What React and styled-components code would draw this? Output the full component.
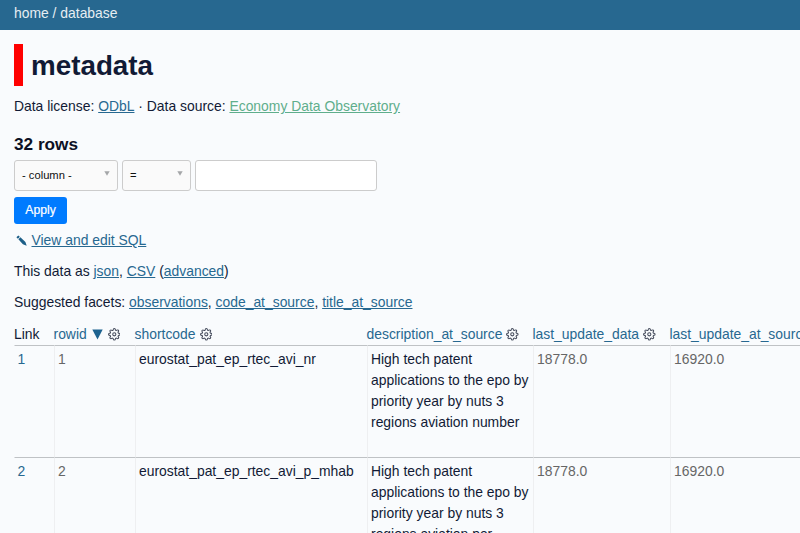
import React from "react";
import styled, { createGlobalStyle } from "styled-components";

const GlobalStyle = createGlobalStyle`
  *, *::before, *::after { box-sizing: border-box; }
  html, body { margin: 0; height: 100%; overflow: hidden; }
  body {
    background: #f9fbfd;
    color: #111a35;
    font-family: "Liberation Sans", Arial, Helvetica, sans-serif;
    font-size: 13.9px;
    line-height: 20.85px;
  }
`;

const Page = styled.div`
  height: 533px;
  overflow: hidden;
`;

const Nav = styled.nav`
  height: 30px;
  padding: 3px 14px 0;
  background: #276890;
  color: #e6eef3;
`;

const Content = styled.main`
  padding: 14px 0 0 14px;
`;

const Title = styled.h1`
  height: 42px;
  margin: 0;
  padding-left: 8px;
  border-left: 9px solid #ff0000;
  font-size: 27.8px;
  line-height: 43px;
`;

const Line = styled.p`
  display: flex;
  align-items: center;
  height: 21px;
  margin: ${(p) => p.$top}px 0 0;
  white-space: pre;
`;

const Link = styled.a`
  color: ${(p) => (p.$green ? "#5fae8c" : "#276890")};
  text-decoration: underline;
`;

const RowCount = styled.h3`
  height: 25px;
  margin: 15px 0 0;
  color: #0c1024;
  font-size: 17.2px;
  line-height: 25px;
`;

const Filters = styled.form`
  display: flex;
  gap: 4px;
  margin-top: 3px;
`;

const Select = styled.div`
  display: flex;
  justify-content: space-between;
  width: ${(p) => p.$width}px;
  height: 31px;
  padding: 0 7px;
  border: 1px solid #ccc;
  border-radius: 3px;
  background: #fafafa;
  color: #111;
  font-size: 11.2px;
  line-height: 29px;
`;

const Caret = styled.svg`
  width: 6px;
  height: 5px;
  margin-top: 10px;
`;

const Input = styled.input`
  width: 182px;
  height: 31px;
  padding: 0 8px;
  border: 1px solid #ccc;
  border-radius: 3px;
  background: #fff;
`;

const Button = styled.button`
  display: block;
  width: 53px;
  height: 27px;
  margin-top: 6px;
  padding: 0;
  border: 0;
  border-radius: 3px;
  background: #007bff;
  color: #fff;
  font: 12.2px/27px "Liberation Sans", Arial, sans-serif;
  -webkit-text-stroke: 0.2px #fff;
`;

const Pencil = styled.svg`
  width: 11px;
  height: 11px;
  margin: 0 5px 0 1.5px;
`;

const Table = styled.table`
  width: 820px;
  margin-top: 10px;
  table-layout: fixed;
  border-collapse: separate;
  border-spacing: 0;
`;

const HeadCell = styled.th`
  width: ${(p) => p.$width}px;
  height: 22px;
  padding: 0;
  color: ${(p) => (p.$plain ? "#111a35" : "#276890")};
  font-weight: 400;
  text-align: left;
  white-space: nowrap;
`;

const HeadLabel = styled.div`
  display: flex;
  align-items: center;
  height: 21px;
`;

const SortMark = styled.svg`
  width: 11px;
  height: 11px;
  margin: 0 1px 0 5px;
`;

const Gear = styled.svg`
  flex: none;
  width: 12.6px;
  height: 12.6px;
  margin: 1px 0 0 4px;
  color: #454b5c;
`;

const Cell = styled.td`
  height: 112px;
  padding: 3px 3px 0 ${(p) => (p.$first ? 2.5 : 3.5)}px;
  border-top: 1px solid #bfc2c5;
  border-left: 1px solid ${(p) => (p.$first ? "#bfc2c500" : "#eeeff1")};
  color: ${(p) => p.$color || "#111a35"};
  vertical-align: top;
`;

const GearIcon = () => (
  <Gear viewBox="0 0 24 24" fill="none" stroke="currentColor" strokeWidth="2" strokeLinecap="round" strokeLinejoin="round">
    <circle cx="12" cy="12" r="3" />
    <path d="M19.4 15a1.65 1.65 0 0 0 .33 1.82l.06.06a2 2 0 0 1 0 2.83 2 2 0 0 1-2.83 0l-.06-.06a1.65 1.65 0 0 0-1.82-.33 1.65 1.65 0 0 0-1 1.51V21a2 2 0 0 1-2 2 2 2 0 0 1-2-2v-.09A1.65 1.65 0 0 0 9 19.4a1.65 1.65 0 0 0-1.82.33l-.06.06a2 2 0 0 1-2.83 0 2 2 0 0 1 0-2.83l.06-.06a1.65 1.65 0 0 0 .33-1.82 1.65 1.65 0 0 0-1.51-1H3a2 2 0 0 1-2-2 2 2 0 0 1 2-2h.09A1.65 1.65 0 0 0 4.6 9a1.65 1.65 0 0 0-.33-1.82l-.06-.06a2 2 0 0 1 0-2.83 2 2 0 0 1 2.83 0l.06.06a1.65 1.65 0 0 0 1.82.33H9a1.65 1.65 0 0 0 1-1.51V3a2 2 0 0 1 2-2 2 2 0 0 1 2 2v.09a1.65 1.65 0 0 0 1 1.51 1.65 1.65 0 0 0 1.82-.33l.06-.06a2 2 0 0 1 2.83 0 2 2 0 0 1 0 2.83l-.06.06a1.65 1.65 0 0 0-.33 1.82V9a1.65 1.65 0 0 0 1.51 1H21a2 2 0 0 1 2 2 2 2 0 0 1-2 2h-.09a1.65 1.65 0 0 0-1.51 1z" />
  </Gear>
);

const CaretIcon = () => (
  <Caret viewBox="0 0 6 5">
    <path d="M.3 .3h5.4L3 4.8z" fill="#a4a6a8" />
  </Caret>
);

const columns = [
  { name: "Link", width: 39.5, plain: true },
  { name: "rowid", width: 81, sorted: true },
  { name: "shortcode", width: 232 },
  { name: "description_at_source", width: 166 },
  { name: "last_update_data", width: 137 },
  { name: "last_update_at_source", width: 164.5 },
];

const rows = [
  ["1", "eurostat_pat_ep_rtec_avi_nr", "High tech patent applications to the epo by priority year by nuts 3 regions aviation number", "18778.0", "16920.0"],
  ["2", "eurostat_pat_ep_rtec_avi_p_mhab", "High tech patent applications to the epo by priority year by nuts 3 regions aviation per million inhabitants", "18778.0", "16920.0"],
];

export default function App() {
  return (
    <Page>
      <GlobalStyle />
      <Nav>home / database</Nav>
      <Content>
        <Title>metadata</Title>
        <Line $top={10}>
          Data license: <Link>ODbL</Link> · Data source: <Link $green>Economy Data Observatory</Link>
        </Line>
        <RowCount>32 rows</RowCount>
        <Filters>
          <Select $width={104}>- column -<CaretIcon /></Select>
          <Select $width={69}>=<CaretIcon /></Select>
          <Input type="text" />
        </Filters>
        <Button type="button">Apply</Button>
        <Line $top={6}>
          <Pencil viewBox="0 0 11 11" fill="#1d5f88">
            <path d="M.4 2.3 2.3.4 3.8 1.7 1.9 3.7zM2.4 4.2 4.4 2.2 9.4 6.9 10.7 10.7 6.9 9.2z" />
          </Pencil>
          <Link>View and edit SQL</Link>
        </Line>
        <Line $top={10}>
          This data as <Link>json</Link>, <Link>CSV</Link> (<Link>advanced</Link>)
        </Line>
        <Line $top={10}>
          Suggested facets: <Link>observations</Link>, <Link>code_at_source</Link>, <Link>title_at_source</Link>
        </Line>
        <Table>
          <thead>
            <tr>
              {columns.map((c) => (
                <HeadCell key={c.name} $width={c.width} $plain={c.plain}>
                  <HeadLabel>
                    {c.name}
                    {c.sorted && (
                      <SortMark viewBox="0 0 11 11">
                        <path d="M.3 .5h10.4L5.5 10.5z" fill="#1d6390" />
                      </SortMark>
                    )}
                    {!c.plain && <GearIcon />}
                  </HeadLabel>
                </HeadCell>
              ))}
            </tr>
          </thead>
          <tbody>
            {rows.map(([id, code, description, updated, source]) => (
              <tr key={id}>
                <Cell $first $color="#276890">{id}</Cell>
                <Cell $color="#666">{id}</Cell>
                <Cell>{code}</Cell>
                <Cell>{description}</Cell>
                <Cell $color="#666">{updated}</Cell>
                <Cell $color="#666">{source}</Cell>
              </tr>
            ))}
          </tbody>
        </Table>
      </Content>
    </Page>
  );
}
